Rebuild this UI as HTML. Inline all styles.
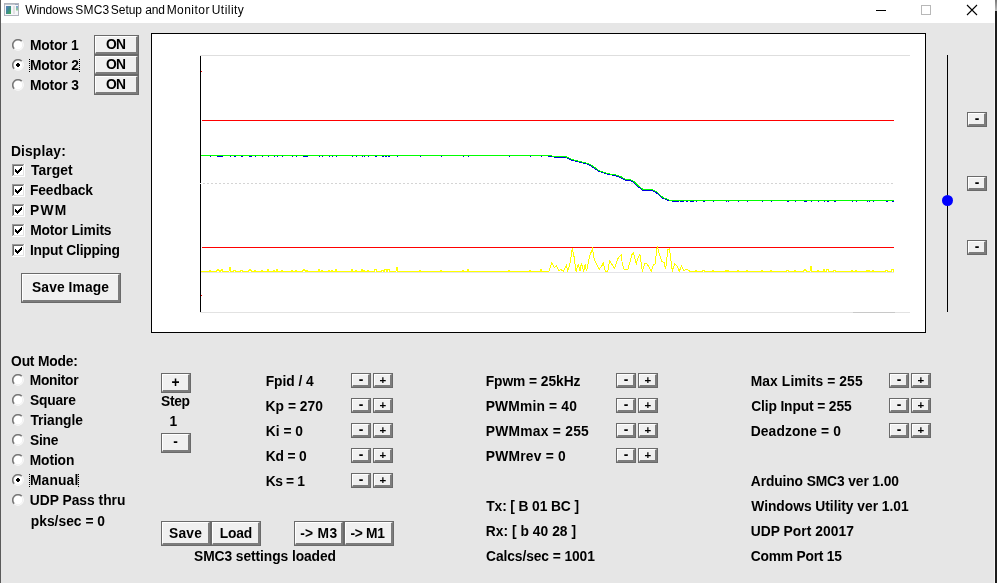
<!DOCTYPE html>
<html><head><meta charset="utf-8"><title>Windows SMC3 Setup and Monitor Utility</title>
<style>
html,body{margin:0;padding:0;}
body{width:997px;height:583px;position:relative;overflow:hidden;background:#e6e6e6;font-family:"Liberation Sans",sans-serif;font-size:13.8px;font-weight:bold;color:#000;}
#app{position:absolute;left:0;top:0;width:997px;height:583px;will-change:transform;}
.t{position:absolute;white-space:nowrap;line-height:15px;height:15px;letter-spacing:0.05px;margin-top:1px;}
.btn{position:absolute;box-sizing:border-box;background:#f0f0f0;border-style:solid;border-width:1px 2px 2px 1px;border-color:#fff #7c7c7c #7c7c7c #fff;box-shadow:0 0 0 1px #6a6a6a;text-align:center;white-space:nowrap;letter-spacing:0.05px;}
.rad{position:absolute;width:12px;height:12px;}
.chk{position:absolute;width:13px;height:13px;}
#title{position:absolute;left:1px;top:0;width:994px;height:23px;background:#fff;}
#title .tt{position:absolute;white-space:pre;top:2px;font-size:12px;font-weight:normal;line-height:16px;}
</style></head><body><div id="app">

<div style="position:absolute;left:0;top:0;width:1px;height:583px;background:#5a5a5a"></div>
<div style="position:absolute;left:994px;top:0;width:1px;height:583px;background:#f4f4f4"></div>
<div style="position:absolute;left:995px;top:0;width:2px;height:583px;background:#1c1c1c"></div>
<div style="position:absolute;left:995px;top:0;width:2px;height:11px;background:linear-gradient(#777,#bbb)"></div>
<div id="title"><span class="tt" id="t900" style="left:24.18px;letter-spacing:-0.112px">Windows </span><span class="tt" id="t901" style="left:74.35px;letter-spacing:0.146px">SMC3 </span><span class="tt" id="t902" style="left:109.87px;letter-spacing:-0.067px">Setup </span><span class="tt" id="t903" style="left:144.17px;letter-spacing:-0.124px">and </span><span class="tt" id="t904" style="left:165.64px;letter-spacing:0.46px">Monitor </span><span class="tt" id="t905" style="left:210.75px;letter-spacing:0.449px">Utility </span>
<svg style="position:absolute;left:2px;top:2px" width="18" height="16" viewBox="3 2 18 16"><defs><linearGradient id="ig1" x1="0" y1="0" x2="1" y2="1"><stop offset="0" stop-color="#5c7ec4"/><stop offset="0.500" stop-color="#3b8c8c"/><stop offset="1" stop-color="#4cb04c"/></linearGradient><linearGradient id="ig2" x1="0" y1="0" x2="0" y2="1"><stop offset="0" stop-color="#7aa0d4"/><stop offset="1" stop-color="#90d48c"/></linearGradient></defs><rect x="4.500" y="3.500" width="14" height="12" fill="#f6f6fa" stroke="#b0b4bd"/><rect x="5" y="4" width="13" height="1" fill="#c4c7ce"/><rect x="15" y="4" width="3" height="1" fill="#9aa6bc"/><rect x="6" y="6" width="5" height="8" fill="url(#ig1)"/><rect x="13" y="6" width="2" height="8" fill="#e2e2e2"/><rect x="16" y="6" width="2" height="4.500" fill="url(#ig2)"/></svg>
<svg style="position:absolute;left:859px;top:0" width="134" height="23" viewBox="0 0 134 23"><path d="M16 10.500H26" stroke="#000" stroke-width="1" fill="none"/><rect x="61.500" y="5.500" width="9" height="9" fill="none" stroke="#b8b8b8"/><path d="M107 5l10 10M117 5l-10 10" stroke="#000" stroke-width="1.100" fill="none"/></svg>
</div>
<svg class="rad" style="left:12px;top:39px" viewBox="0 0 12 12"><circle cx="6" cy="6" r="5.800" fill="#fff"/><path d="M2.250 9.750A5.300 5.300 0 0 1 9.750 2.250" fill="none" stroke="#787878" stroke-width="1.600"/><path d="M9.400 2.600A4.800 4.800 0 0 1 2.600 9.400" fill="none" stroke="#ebebeb" stroke-width="0.800"/></svg>
<div class="t" id="t1" style="left:29.97px;top:37px;letter-spacing:-0.198px;">Motor 1</div>
<div class="btn" style="left:95px;top:36px;width:43px;height:18px;line-height:15px"><span id="t2" style="position:relative;left:0.02px;letter-spacing:-0.824px;margin-right:0.824px">ON</span></div>
<svg class="rad" style="left:12px;top:59px" viewBox="0 0 12 12"><circle cx="6" cy="6" r="5.800" fill="#fff"/><path d="M2.250 9.750A5.300 5.300 0 0 1 9.750 2.250" fill="none" stroke="#787878" stroke-width="1.600"/><path d="M9.400 2.600A4.800 4.800 0 0 1 2.600 9.400" fill="none" stroke="#ebebeb" stroke-width="0.800"/><path d="M5 4h2v1h1v2h-1v1h-2v-1h-1v-2h1z" fill="#000"/></svg>
<div class="t" id="t3" style="left:29.93px;top:57px;letter-spacing:-0.153px;">Motor 2</div>
<div class="fc" style="position:absolute;left:29px;top:59px;width:1px;height:14px;background:repeating-linear-gradient(#000 0 1px,transparent 1px 2px)"></div>
<div class="fc" style="position:absolute;left:79px;top:59px;width:1px;height:14px;background:repeating-linear-gradient(#000 0 1px,transparent 1px 2px)"></div>
<div class="btn" style="left:95px;top:56px;width:43px;height:18px;line-height:15px"><span id="t4" style="position:relative;left:0.02px;letter-spacing:-0.824px;margin-right:0.824px">ON</span></div>
<svg class="rad" style="left:12px;top:79px" viewBox="0 0 12 12"><circle cx="6" cy="6" r="5.800" fill="#fff"/><path d="M2.250 9.750A5.300 5.300 0 0 1 9.750 2.250" fill="none" stroke="#787878" stroke-width="1.600"/><path d="M9.400 2.600A4.800 4.800 0 0 1 2.600 9.400" fill="none" stroke="#ebebeb" stroke-width="0.800"/></svg>
<div class="t" id="t5" style="left:29.93px;top:77px;letter-spacing:-0.147px;">Motor 3</div>
<div class="btn" style="left:95px;top:76px;width:43px;height:18px;line-height:15px"><span id="t6" style="position:relative;left:0.02px;letter-spacing:-0.824px;margin-right:0.824px">ON</span></div>
<div class="t" id="t7" style="left:10.89px;top:143px;letter-spacing:0.168px;">Display:</div>
<svg class="chk" style="left:12px;top:164px" viewBox="0 0 13 13" shape-rendering="crispEdges"><rect x="0" y="0" width="13" height="13" fill="#fff"/><path d="M0 0h12v1h-11v11h-1z" fill="#9a9a9a"/><path d="M1 1h10v1h-9v9h-1z" fill="#6a6a6a"/><path d="M12 0h1v13h-13v-1h12z" fill="#fff"/><path d="M11 1h1v11h-11v-1h10z" fill="#e3e3e3"/><path d="M3 5h1v1h1v1h1v-1h1v-1h1v-1h1v-1h1v3h-1v1h-1v1h-1v1h-1v1h-1v-1h-1v-1h-1z" fill="#000"/></svg>
<div class="t" id="t8" style="left:30.9px;top:162px;letter-spacing:0.12px;">Target</div>
<svg class="chk" style="left:12px;top:184px" viewBox="0 0 13 13" shape-rendering="crispEdges"><rect x="0" y="0" width="13" height="13" fill="#fff"/><path d="M0 0h12v1h-11v11h-1z" fill="#9a9a9a"/><path d="M1 1h10v1h-9v9h-1z" fill="#6a6a6a"/><path d="M12 0h1v13h-13v-1h12z" fill="#fff"/><path d="M11 1h1v11h-11v-1h10z" fill="#e3e3e3"/><path d="M3 5h1v1h1v1h1v-1h1v-1h1v-1h1v-1h1v3h-1v1h-1v1h-1v1h-1v1h-1v-1h-1v-1h-1z" fill="#000"/></svg>
<div class="t" id="t9" style="left:29.94px;top:182px;letter-spacing:-0.085px;">Feedback</div>
<svg class="chk" style="left:12px;top:204px" viewBox="0 0 13 13" shape-rendering="crispEdges"><rect x="0" y="0" width="13" height="13" fill="#fff"/><path d="M0 0h12v1h-11v11h-1z" fill="#9a9a9a"/><path d="M1 1h10v1h-9v9h-1z" fill="#6a6a6a"/><path d="M12 0h1v13h-13v-1h12z" fill="#fff"/><path d="M11 1h1v11h-11v-1h10z" fill="#e3e3e3"/><path d="M3 5h1v1h1v1h1v-1h1v-1h1v-1h1v-1h1v3h-1v1h-1v1h-1v1h-1v1h-1v-1h-1v-1h-1z" fill="#000"/></svg>
<div class="t" id="t10" style="left:30.07px;top:202px;letter-spacing:1.282px;">PWM</div>
<svg class="chk" style="left:12px;top:224px" viewBox="0 0 13 13" shape-rendering="crispEdges"><rect x="0" y="0" width="13" height="13" fill="#fff"/><path d="M0 0h12v1h-11v11h-1z" fill="#9a9a9a"/><path d="M1 1h10v1h-9v9h-1z" fill="#6a6a6a"/><path d="M12 0h1v13h-13v-1h12z" fill="#fff"/><path d="M11 1h1v11h-11v-1h10z" fill="#e3e3e3"/><path d="M3 5h1v1h1v1h1v-1h1v-1h1v-1h1v-1h1v3h-1v1h-1v1h-1v1h-1v1h-1v-1h-1v-1h-1z" fill="#000"/></svg>
<div class="t" id="t11" style="left:30.13px;top:222px;letter-spacing:-0.124px;">Motor Limits</div>
<svg class="chk" style="left:12px;top:244px" viewBox="0 0 13 13" shape-rendering="crispEdges"><rect x="0" y="0" width="13" height="13" fill="#fff"/><path d="M0 0h12v1h-11v11h-1z" fill="#9a9a9a"/><path d="M1 1h10v1h-9v9h-1z" fill="#6a6a6a"/><path d="M12 0h1v13h-13v-1h12z" fill="#fff"/><path d="M11 1h1v11h-11v-1h10z" fill="#e3e3e3"/><path d="M3 5h1v1h1v1h1v-1h1v-1h1v-1h1v-1h1v3h-1v1h-1v1h-1v1h-1v1h-1v-1h-1v-1h-1z" fill="#000"/></svg>
<div class="t" id="t12" style="left:29.94px;top:242px;letter-spacing:-0.206px;">Input Clipping</div>
<div class="btn" style="left:22px;top:274px;width:98px;height:28px;line-height:25px"><span id="t13" style="position:relative;left:-0.03px;letter-spacing:0.103px;margin-right:-0.103px">Save Image</span></div>
<div class="t" id="t14" style="left:11.09px;top:353px;letter-spacing:-0.182px;">Out Mode:</div>
<svg class="rad" style="left:12px;top:374px" viewBox="0 0 12 12"><circle cx="6" cy="6" r="5.800" fill="#fff"/><path d="M2.250 9.750A5.300 5.300 0 0 1 9.750 2.250" fill="none" stroke="#787878" stroke-width="1.600"/><path d="M9.400 2.600A4.800 4.800 0 0 1 2.600 9.400" fill="none" stroke="#ebebeb" stroke-width="0.800"/></svg>
<div class="t" id="t15" style="left:29.77px;top:372px;letter-spacing:-0.286px;">Monitor</div>
<svg class="rad" style="left:12px;top:394px" viewBox="0 0 12 12"><circle cx="6" cy="6" r="5.800" fill="#fff"/><path d="M2.250 9.750A5.300 5.300 0 0 1 9.750 2.250" fill="none" stroke="#787878" stroke-width="1.600"/><path d="M9.400 2.600A4.800 4.800 0 0 1 2.600 9.400" fill="none" stroke="#ebebeb" stroke-width="0.800"/></svg>
<div class="t" id="t16" style="left:30.1px;top:392px;letter-spacing:-0.206px;">Square</div>
<svg class="rad" style="left:12px;top:414px" viewBox="0 0 12 12"><circle cx="6" cy="6" r="5.800" fill="#fff"/><path d="M2.250 9.750A5.300 5.300 0 0 1 9.750 2.250" fill="none" stroke="#787878" stroke-width="1.600"/><path d="M9.400 2.600A4.800 4.800 0 0 1 2.600 9.400" fill="none" stroke="#ebebeb" stroke-width="0.800"/></svg>
<div class="t" id="t17" style="left:30.43px;top:412px;letter-spacing:-0.068px;">Triangle</div>
<svg class="rad" style="left:12px;top:434px" viewBox="0 0 12 12"><circle cx="6" cy="6" r="5.800" fill="#fff"/><path d="M2.250 9.750A5.300 5.300 0 0 1 9.750 2.250" fill="none" stroke="#787878" stroke-width="1.600"/><path d="M9.400 2.600A4.800 4.800 0 0 1 2.600 9.400" fill="none" stroke="#ebebeb" stroke-width="0.800"/></svg>
<div class="t" id="t18" style="left:30.05px;top:432px;letter-spacing:-0.277px;">Sine</div>
<svg class="rad" style="left:12px;top:454px" viewBox="0 0 12 12"><circle cx="6" cy="6" r="5.800" fill="#fff"/><path d="M2.250 9.750A5.300 5.300 0 0 1 9.750 2.250" fill="none" stroke="#787878" stroke-width="1.600"/><path d="M9.400 2.600A4.800 4.800 0 0 1 2.600 9.400" fill="none" stroke="#ebebeb" stroke-width="0.800"/></svg>
<div class="t" id="t19" style="left:29.71px;top:452px;letter-spacing:-0.114px;">Motion</div>
<svg class="rad" style="left:12px;top:474px" viewBox="0 0 12 12"><circle cx="6" cy="6" r="5.800" fill="#fff"/><path d="M2.250 9.750A5.300 5.300 0 0 1 9.750 2.250" fill="none" stroke="#787878" stroke-width="1.600"/><path d="M9.400 2.600A4.800 4.800 0 0 1 2.600 9.400" fill="none" stroke="#ebebeb" stroke-width="0.800"/><path d="M5 4h2v1h1v2h-1v1h-2v-1h-1v-2h1z" fill="#000"/></svg>
<div class="t" id="t20" style="left:29.91px;top:472px;letter-spacing:0.164px;">Manual</div>
<div class="fc" style="position:absolute;left:29px;top:474px;width:1px;height:14px;background:repeating-linear-gradient(#000 0 1px,transparent 1px 2px)"></div>
<div class="fc" style="position:absolute;left:78px;top:474px;width:1px;height:14px;background:repeating-linear-gradient(#000 0 1px,transparent 1px 2px)"></div>
<svg class="rad" style="left:12px;top:494px" viewBox="0 0 12 12"><circle cx="6" cy="6" r="5.800" fill="#fff"/><path d="M2.250 9.750A5.300 5.300 0 0 1 9.750 2.250" fill="none" stroke="#787878" stroke-width="1.600"/><path d="M9.400 2.600A4.800 4.800 0 0 1 2.600 9.400" fill="none" stroke="#ebebeb" stroke-width="0.800"/></svg>
<div class="t" id="t21" style="left:29.74px;top:492px;letter-spacing:0.006px;">UDP Pass thru</div>
<div class="t" id="t22" style="left:30.76px;top:513px;letter-spacing:0.026px;">pks/sec = 0</div>
<div style="position:absolute;left:151px;top:33px;width:775px;height:300px;box-sizing:border-box;background:#fff;border:1px solid #000;"></div>
<svg id="graph" style="position:absolute;left:151px;top:33px" width="775" height="300" viewBox="151 33 775 300"><g shape-rendering="crispEdges" fill="none"><path d="M200 55.500H910" stroke="#dedede"/><path d="M200 312.500H910" stroke="#e2e2e2"/><path d="M853 312.500H895" stroke="#c8c8c8"/><path d="M203 183.500H894" stroke="#d4d4d4" stroke-dasharray="2 2"/><path d="M201 272.500H894" stroke="#e4e4e8"/><path d="M200.500 56V312" stroke="#000"/><path d="M200 183.500H201" stroke="#ddd"/><path d="M201 71.500H202M201 295.500H202" stroke="#f00"/><path d="M202 120.500H894M202 247.500H894" stroke="#f00"/><path d="M210 156.500h1M217 156.500h6M230 156.500h1M234 156.500h2M241 156.500h2M249 156.500h3M255 156.500h1M262 156.500h1M268 156.500h1M274 156.500h1M277 156.500h1M282 156.500h1M292 156.500h1M296 156.500h1M303 156.500h5M319 156.500h1M322 156.500h1M329 156.500h1M332 156.500h1M336 156.500h1M352 156.500h1M356 156.500h1M362 156.500h1M364 156.500h1M368 156.500h1M375 156.500h2M382 156.500h2M385 156.500h2M388 156.500h2M397 156.500h1M420 156.500h1M441 156.500h1M463 156.500h1M468 156.500h1M509 156.500h1M530 156.500h1M541 156.500h1M675 201.500h4M680 201.500h4M686 201.500h2M690 201.500h4M696 201.500h1M703 201.500h2M713 201.500h1M726 201.500h1M728 201.500h1M738 201.500h1M747 201.500h1M762 201.500h1M771 201.500h1M787 201.500h2M795 201.500h1M804 201.500h3M811 201.500h1M818 201.500h1M824 201.500h1M827 201.500h2M834 201.500h2M852 201.500h1M856 201.500h1M867 201.500h1M869 201.500h1M873 201.500h1M886 201.500h2M892 201.500h2" stroke="#0000e0"/><polyline points="546,155.5 548.4,156.1 554.4,157.1 564.4,157.1 568,158.3 571.7,160.2 577,161.4 586.8,163.9 591.3,166.2 598.8,171.4 607.9,174.4 613.9,175.2 620.6,177.5 625.2,180 630.4,180.5 634.2,182.7 638.7,187.2 642.5,190.2 651.5,190.2 656,192.5 662,197.8 668,200.5 672.5,201.1 676,201" stroke="#0000e0" stroke-width="1"/><polyline points="201,155.5 549,155.5 555,156.5 565,156.5 568.6,157.7 572.3,159.6 577.6,160.8 587.4,163.3 591.9,165.6 599.4,170.8 608.5,173.8 614.5,174.6 621.2,176.9 625.8,179.4 631,179.9 634.8,182.1 639.3,186.6 643.1,189.6 652.1,189.6 656.6,191.9 662.6,197.2 668.6,199.9 673.1,200.5 894,200.5" stroke="#00ff00" stroke-width="1"/><polyline points="201,271.5 209,271.5 210,270.5 210,270.5 211,271.5 216,271.5 217,270.5 218,269.5 219,270.5 220,271.5 221,270.5 222,269.5 223,271.5 229,271.5 230,267.5 230,267.5 231,271.5 233,271.5 234,270.5 235,270.5 236,271.5 240,271.5 241,270.5 242,270.5 243,271.5 248,271.5 249,270.5 250,269.5 251,270.5 252,271.5 254,271.5 255,270.5 255,270.5 256,271.5 261,271.5 262,270.5 262,270.5 263,271.5 267,271.5 268,269.5 268,269.5 269,271.5 273,271.5 274,270.5 274,270.5 275,271.5 276,271.5 277,269.5 277,269.5 278,271.5 281,271.5 282,270.5 282,270.5 283,271.5 291,271.5 292,270.5 292,270.5 293,271.5 295,271.5 296,270.5 296,270.5 297,271.5 302,271.5 303,270.5 304,269.5 305,270.5 306,271.5 307,270.5 308,271.5 318,271.5 319,269.5 319,269.5 320,271.5 321,271.5 322,270.5 322,270.5 323,271.5 328,271.5 329,270.5 329,270.5 330,271.5 331,271.5 332,270.5 332,270.5 333,271.5 335,271.5 336,269.5 336,269.5 337,271.5 351,271.5 352,269.5 352,269.5 353,271.5 355,271.5 356,270.5 356,270.5 357,271.5 361,271.5 362,269.5 362,269.5 363,271.5 363,271.5 364,270.5 364,270.5 365,271.5 367,271.5 368,270.5 368,270.5 369,271.5 374,271.5 375,269.5 376,269.5 377,271.5 381,271.5 382,270.5 383,270.5 384,271.5 384,271.5 385,269.5 386,269.5 387,271.5 387,271.5 388,269.5 389,269.5 390,271.5 396,271.5 397,267.5 397,267.5 398,271.5 419,271.5 420,270.5 420,270.5 421,271.5 440,271.5 441,270.5 441,270.5 442,271.5 462,271.5 463,270.5 463,270.5 464,271.5 467,271.5 468,269.5 468,269.5 469,271.5 508,271.5 509,270.5 509,270.5 510,271.5 529,271.5 530,270.5 530,270.5 531,271.5 540,271.5 541,269.5 541,269.5 542,271.5 540,271.5 549,271.4 551.7,262.7 554.3,267.6 556.5,266.1 558.8,270.7 561.1,269.6 563.3,271.4 566.3,265.4 567.8,270.7 570.1,263.1 572.3,248.5 573.8,254.9 576.1,271.4 578.4,263.9 579.9,271.4 581.4,263.1 583.6,271.4 585.1,264.6 586.6,271.4 589.6,256.4 592.4,248.8 594.2,259.4 596.4,263.9 599.4,269.1 601.7,266.1 603.2,263.1 605.4,271.4 607.7,271.4 609.5,260.9 612.2,264.6 614.5,268.4 618.2,257.9 621.2,254.9 622.4,264.6 624.2,269.1 628,269.1 631.8,254.9 633.6,253.1 636.3,263.9 638.5,256.4 640,254.6 642.3,271.4 644.6,263.9 647.1,263.9 651.3,271.4 653.6,264.6 655.1,263.9 657.3,245.8 659.6,254.9 661.9,261.6 664.1,262.4 665.6,269.1 667.9,249.6 669.4,248.8 672.4,271.4 674.6,263.9 676.9,265.4 679.2,271.4 681.4,266.1 683.7,270.7 686.7,269.1 690,271.4 695,271.5 696,270.5 696,270.5 697,271.5 702,271.5 703,270.5 704,270.5 705,271.5 712,271.5 713,270.5 713,270.5 714,271.5 725,271.5 726,270.5 726,270.5 727,271.5 727,271.5 728,270.5 728,270.5 729,271.5 737,271.5 738,270.5 738,270.5 739,271.5 746,271.5 747,270.5 747,270.5 748,271.5 761,271.5 762,270.5 762,270.5 763,271.5 770,271.5 771,270.5 771,270.5 772,271.5 786,271.5 787,270.5 788,270.5 789,271.5 794,271.5 795,270.5 795,270.5 796,271.5 803,271.5 804,270.5 805,269.5 806,270.5 807,271.5 810,271.5 811,266.5 811,266.5 812,271.5 817,271.5 818,270.5 818,270.5 819,271.5 823,271.5 824,269.5 824,269.5 825,271.5 826,271.5 827,269.5 828,269.5 829,271.5 833,271.5 834,270.5 835,270.5 836,271.5 851,271.5 852,270.5 852,270.5 853,271.5 855,271.5 856,270.5 856,270.5 857,271.5 866,271.5 867,270.5 867,270.5 868,271.5 868,271.5 869,270.5 869,270.5 870,271.5 872,271.5 873,270.5 873,270.5 874,271.5 885,271.5 886,270.5 887,270.5 888,271.5 891,271.5 892,269.5 893,269.5 894,271.5 894,271.5" stroke="#ffff00" stroke-width="1"/></g></svg>
<div style="position:absolute;left:947px;top:55px;width:1px;height:257px;background:#000"></div>
<div style="position:absolute;left:942px;top:195px;width:11px;height:11px;border-radius:50%;background:#0000ff"></div>
<div class="btn" style="left:968px;top:113px;width:18px;height:13px;padding-left:1px;line-height:10px;">-</div>
<div class="btn" style="left:968px;top:177px;width:18px;height:13px;padding-left:1px;line-height:10px;">-</div>
<div class="btn" style="left:968px;top:241px;width:18px;height:13px;padding-left:1px;line-height:10px;">-</div>
<div class="btn" style="left:162px;top:374px;width:28px;height:18px;line-height:15px"><span id="t23" style="position:relative;left:0px;letter-spacing:0.05px;margin-right:-0.05px">+</span></div>
<div class="t" id="t24" style="left:161.01px;top:393px;letter-spacing:-0.294px;">Step</div>
<div class="t" id="t25" style="left:169.6px;top:413px;letter-spacing:0.05px;">1</div>
<div class="btn" style="left:162px;top:434px;width:28px;height:18px;line-height:13px"><span id="t26" style="position:relative;left:0px;letter-spacing:0.05px;margin-right:-0.05px">-</span></div>
<div class="t" id="t27" style="left:265.73px;top:373px;letter-spacing:-0.041px;">Fpid / 4</div>
<div class="btn" style="left:352px;top:374px;width:18px;height:13px;padding-left:1px;line-height:10px;">-</div>
<div class="btn" style="left:374px;top:374px;width:18px;height:13px;padding-left:1px;font-size:11.5px;line-height:11px;">+</div>
<div class="t" id="t28" style="left:265.61px;top:398px;letter-spacing:0.019px;">Kp = 270</div>
<div class="btn" style="left:352px;top:399px;width:18px;height:13px;padding-left:1px;line-height:10px;">-</div>
<div class="btn" style="left:374px;top:399px;width:18px;height:13px;padding-left:1px;font-size:11.5px;line-height:11px;">+</div>
<div class="t" id="t29" style="left:265.65px;top:423px;letter-spacing:0.036px;">Ki = 0</div>
<div class="btn" style="left:352px;top:424px;width:18px;height:13px;padding-left:1px;line-height:10px;">-</div>
<div class="btn" style="left:374px;top:424px;width:18px;height:13px;padding-left:1px;font-size:11.5px;line-height:11px;">+</div>
<div class="t" id="t30" style="left:265.64px;top:448px;letter-spacing:-0.13px;">Kd = 0</div>
<div class="btn" style="left:352px;top:449px;width:18px;height:13px;padding-left:1px;line-height:10px;">-</div>
<div class="btn" style="left:374px;top:449px;width:18px;height:13px;padding-left:1px;font-size:11.5px;line-height:11px;">+</div>
<div class="t" id="t31" style="left:265.65px;top:473px;letter-spacing:-0.339px;">Ks = 1</div>
<div class="btn" style="left:352px;top:474px;width:18px;height:13px;padding-left:1px;line-height:10px;">-</div>
<div class="btn" style="left:374px;top:474px;width:18px;height:13px;padding-left:1px;font-size:11.5px;line-height:11px;">+</div>
<div class="t" id="t32" style="left:485.74px;top:373px;letter-spacing:-0.066px;">Fpwm = 25kHz</div>
<div class="btn" style="left:617px;top:374px;width:18px;height:13px;padding-left:1px;line-height:10px;">-</div>
<div class="btn" style="left:639px;top:374px;width:18px;height:13px;padding-left:1px;font-size:11.5px;line-height:11px;">+</div>
<div class="t" id="t33" style="left:485.73px;top:398px;letter-spacing:0.177px;">PWMmin = 40</div>
<div class="btn" style="left:617px;top:399px;width:18px;height:13px;padding-left:1px;line-height:10px;">-</div>
<div class="btn" style="left:639px;top:399px;width:18px;height:13px;padding-left:1px;font-size:11.5px;line-height:11px;">+</div>
<div class="t" id="t34" style="left:485.67px;top:423px;letter-spacing:0.277px;">PWMmax = 255</div>
<div class="btn" style="left:617px;top:424px;width:18px;height:13px;padding-left:1px;line-height:10px;">-</div>
<div class="btn" style="left:639px;top:424px;width:18px;height:13px;padding-left:1px;font-size:11.5px;line-height:11px;">+</div>
<div class="t" id="t35" style="left:485.79px;top:448px;letter-spacing:0.24px;">PWMrev = 0</div>
<div class="btn" style="left:617px;top:449px;width:18px;height:13px;padding-left:1px;line-height:10px;">-</div>
<div class="btn" style="left:639px;top:449px;width:18px;height:13px;padding-left:1px;font-size:11.5px;line-height:11px;">+</div>
<div class="t" id="t36" style="left:486.25px;top:498px;letter-spacing:-0.11px;">Tx: [ B 01 BC ]</div>
<div class="t" id="t37" style="left:485.79px;top:523px;letter-spacing:0.038px;">Rx: [ b 40 28 ]</div>
<div class="t" id="t38" style="left:486.08px;top:548px;letter-spacing:-0.09px;">Calcs/sec = 1001</div>
<div class="t" id="t39" style="left:750.71px;top:373px;letter-spacing:0.123px;">Max Limits = 255</div>
<div class="btn" style="left:890px;top:374px;width:18px;height:13px;padding-left:1px;line-height:10px;">-</div>
<div class="btn" style="left:912px;top:374px;width:18px;height:13px;padding-left:1px;font-size:11.5px;line-height:11px;">+</div>
<div class="t" id="t40" style="left:751.14px;top:398px;letter-spacing:-0.122px;">Clip Input = 255</div>
<div class="btn" style="left:890px;top:399px;width:18px;height:13px;padding-left:1px;line-height:10px;">-</div>
<div class="btn" style="left:912px;top:399px;width:18px;height:13px;padding-left:1px;font-size:11.5px;line-height:11px;">+</div>
<div class="t" id="t41" style="left:750.67px;top:423px;letter-spacing:0.144px;">Deadzone = 0</div>
<div class="btn" style="left:890px;top:424px;width:18px;height:13px;padding-left:1px;line-height:10px;">-</div>
<div class="btn" style="left:912px;top:424px;width:18px;height:13px;padding-left:1px;font-size:11.5px;line-height:11px;">+</div>
<div class="t" id="t42" style="left:750.8px;top:473px;letter-spacing:-0.109px;">Arduino SMC3 ver 1.00</div>
<div class="t" id="t43" style="left:751.29px;top:498px;letter-spacing:-0.023px;">Windows Utility ver 1.01</div>
<div class="t" id="t44" style="left:750.67px;top:523px;letter-spacing:0.057px;">UDP Port 20017</div>
<div class="t" id="t45" style="left:750.85px;top:548px;letter-spacing:-0.229px;">Comm Port 15</div>
<div class="btn" style="left:162px;top:522px;width:48px;height:23px;line-height:22px"><span id="t46" style="position:relative;left:-0.07px;letter-spacing:0.19px;margin-right:-0.19px">Save</span></div>
<div class="btn" style="left:212px;top:522px;width:48px;height:23px;line-height:22px"><span id="t47" style="position:relative;left:0.52px;letter-spacing:-0.165px;margin-right:0.165px">Load</span></div>
<div class="btn" style="left:295px;top:522px;width:48px;height:23px;line-height:22px"><span id="t48" style="position:relative;left:0.16px;letter-spacing:0.308px;margin-right:-0.308px">-&gt; M3</span></div>
<div class="btn" style="left:345px;top:522px;width:48px;height:23px;line-height:22px"><span id="t49" style="position:relative;left:-0.74px;letter-spacing:-0.332px;margin-right:0.332px">-&gt; M1</span></div>
<div class="t" id="t50" style="left:194.02px;top:548px;letter-spacing:-0.073px;">SMC3 settings loaded</div>
</div></body></html>
